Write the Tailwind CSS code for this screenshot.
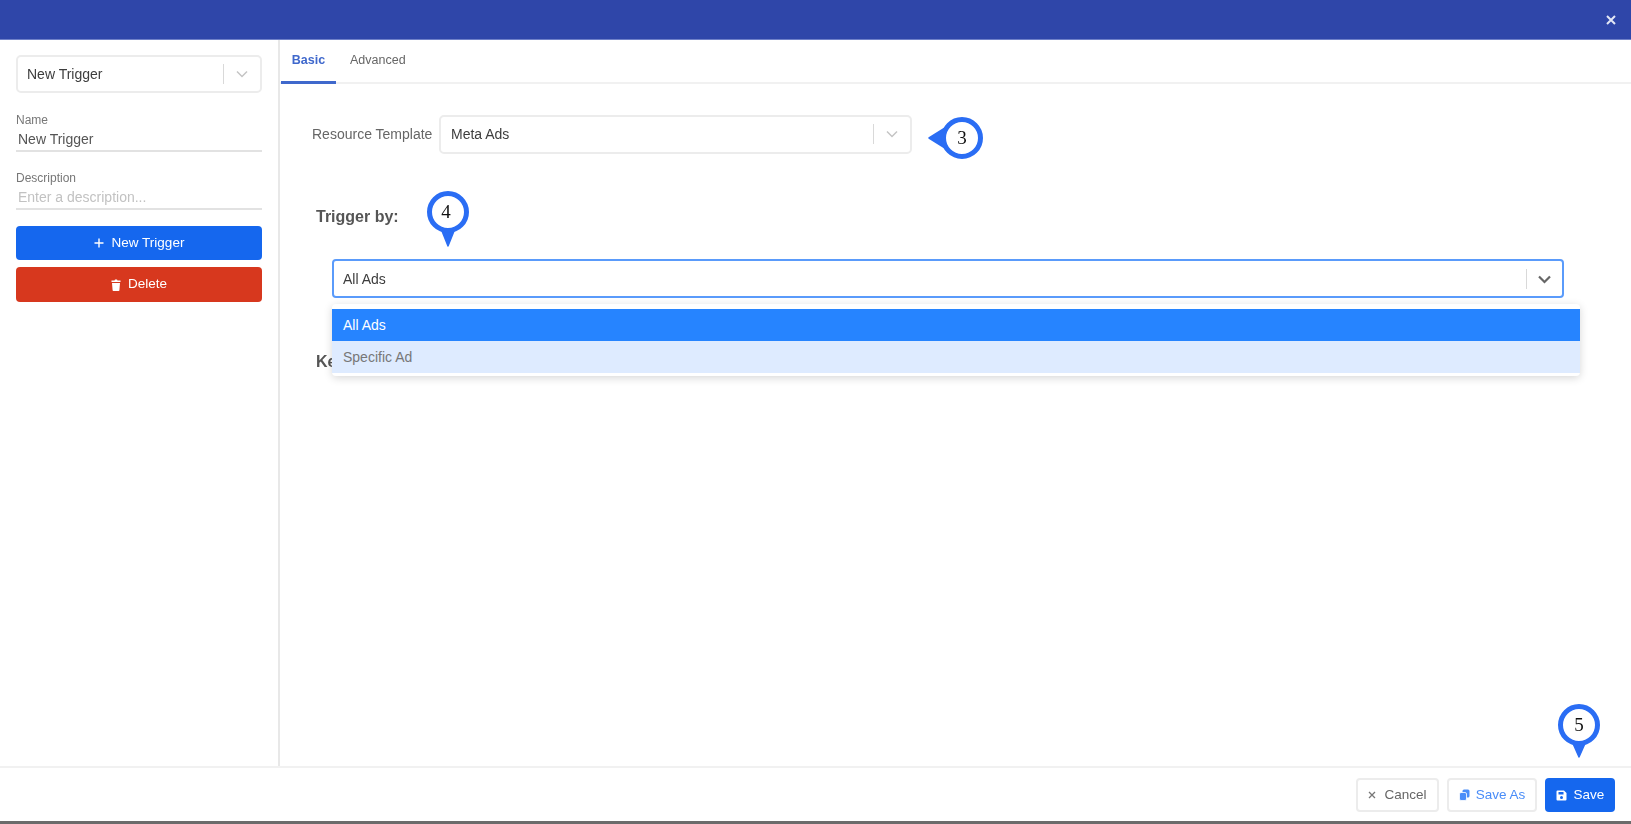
<!DOCTYPE html>
<html lang="en">

<head>
    <meta charset="UTF-8">
    <meta name="viewport" content="width=device-width, initial-scale=1.0">
    <title>Trigger</title>
    <script src="https://cdn.jsdelivr.net/npm/@tailwindcss/browser@4"></script>
</head>

<body class="m-0 p-0 h-screen w-screen relative overflow-hidden bg-white font-['Liberation_Sans',sans-serif] text-[#555]">

    <div class="h-full w-full flex flex-col blur-[0.5px]">

        <!-- title bar -->
        <div class="h-[40px] shrink-0 bg-[#2f46a9] border-b border-[#6f80c8] flex justify-end items-center pr-[14px] pt-[1px]">
            <svg class="w-[12px] h-[12px] text-[#e4e7f5]" viewBox="0 0 12 12" fill="none" stroke="currentColor" stroke-width="2">
                <path d="M2 2l8 8M10 2l-8 8"></path>
            </svg>
        </div>

        <div class="flex-1 flex min-h-0">

            <!-- sidebar -->
            <div class="w-[280px] shrink-0 border-r-2 border-[#e8e8e8] pl-[16px] pt-[15px]">
                <div class="h-[38px] w-[246px] border-2 border-[#ececec] rounded-[5px] flex items-center pl-[9px] text-[14px] text-[#3d3d3d]">
                    <span class="flex-1">New Trigger</span>
                    <span class="w-[1px] h-[20px] bg-[#d9d9d9]"></span>
                    <svg class="w-[12px] h-[8px] mx-[12px] text-[#c4c4c4]" viewBox="0 0 12 8" fill="none" stroke="currentColor" stroke-width="1.5"><path d="M1 1.5l5 5 5-5"></path></svg>
                </div>

                <div class="mt-[19px] text-[12px] leading-[16px] text-[#777]">Name</div>
                <div class="h-[24px] w-[246px] border-b-2 border-[#e2e2e2] pl-[2px] text-[14px] leading-[22px] text-[#555]">New Trigger</div>

                <div class="mt-[18px] text-[12px] leading-[16px] text-[#777]">Description</div>
                <div class="h-[24px] w-[246px] border-b-2 border-[#e2e2e2] pl-[2px] text-[14px] leading-[22px] text-[#c2c2c2]">Enter a description...</div>

                <button class="mt-[16px] h-[34px] w-[246px] bg-[#1567ee] rounded-[4px] flex justify-center items-center gap-[8px] text-[13.5px] font-medium text-white">
                    <svg class="w-[10px] h-[10px]" viewBox="0 0 10 10" fill="none" stroke="currentColor" stroke-width="1.4"><path d="M5 0.5v9M0.5 5h9"></path></svg>
                    New Trigger
                </button>
                <button class="mt-[7px] h-[35px] w-[246px] bg-[#d7381e] rounded-[4px] flex justify-center items-center gap-[7px] text-[13.5px] font-medium text-white">
                    <svg class="w-[10px] h-[12px]" viewBox="0 0 10 12" fill="currentColor"><path d="M0.5 1.5h3l0.5-1h2l0.5 1h3v1.5h-9zM1 4h8l-0.6 7.2a0.8 0.8 0 0 1-0.8 0.8h-5.2a0.8 0.8 0 0 1-0.8-0.8z"></path></svg>
                    Delete
                </button>
            </div>

            <!-- content -->
            <div class="flex-1 min-w-0">
                <div class="h-[44px] border-b-2 border-[#f1f1f1] flex pl-[1px] text-[12.5px] leading-[41px]">
                    <div class="w-[55px] h-[44px] text-center font-bold text-[#3f68cc] border-b-[3px] border-[#3f68cc]">Basic</div>
                    <div class="ml-[14px] text-[#666]">Advanced</div>
                </div>

                <div class="pl-[32px] pt-[31px] flex items-center h-[69px]">
                    <span class="text-[14px] text-[#666] w-[127px] pt-[1px]">Resource Template</span>
                    <div class="h-[39px] w-[473px] border-2 border-[#ececec] rounded-[5px] flex items-center pl-[10px] text-[14px] text-[#3d3d3d]">
                        <span class="flex-1">Meta Ads</span>
                        <span class="w-[1px] h-[20px] bg-[#d9d9d9]"></span>
                        <svg class="w-[12px] h-[8px] mx-[12px] text-[#c4c4c4]" viewBox="0 0 12 8" fill="none" stroke="currentColor" stroke-width="1.5"><path d="M1 1.5l5 5 5-5"></path></svg>
                    </div>
                </div>

                <div class="pl-[36px] mt-[54px] text-[16px] leading-[20px] font-bold text-[#555]">Trigger by:</div>

                <div class="relative ml-[52px] mt-[32px] w-[1232px]">
                    <div class="h-[39px] border-2 border-[#5a9bfb] rounded-[4px] flex items-center pl-[9px] pt-[1px] text-[14px] text-[#3d3d3d]">
                        <span class="flex-1">All Ads</span>
                        <span class="w-[1px] h-[20px] bg-[#d9d9d9]"></span>
                        <svg class="w-[13px] h-[9px] mx-[11px] text-[#666]" viewBox="0 0 13 9" fill="none" stroke="currentColor" stroke-width="2.2"><path d="M1 1.5l5.5 5.5 5.5-5.5"></path></svg>
                    </div>
                    <!-- dropdown menu -->
                    <div class="absolute z-10 left-[0px] top-[45px] w-[1248px] h-[72px] py-[5px] bg-white rounded-[4px] shadow-[0_2px_8px_rgba(0,0,0,0.16)] text-[14px]">
                        <div class="h-[32px] bg-[#2684ff] text-white pl-[11px] leading-[33px]">All Ads</div>
                        <div class="h-[32px] bg-[#deebff] text-[#777] pl-[11px] leading-[32px]">Specific Ad</div>
                    </div>
                </div>

                <div class="pl-[36px] mt-[54px] text-[16px] leading-[20px] font-bold text-[#555]">Keywords</div>
            </div>
        </div>

        <!-- footer -->
        <div class="h-[58px] shrink-0 border-t-2 border-b-[3px] border-t-[#f1f1f1] border-b-[#6b6b6b] flex justify-end items-start gap-[8px] pt-[10px] pr-[16px] text-[13.5px] font-medium">
            <button class="h-[34px] w-[83px] border-2 border-[#ececec] rounded-[4px] flex justify-center items-center gap-[8px] text-[#666]">
                <svg class="w-[8px] h-[8px] text-[#777]" viewBox="0 0 8 8" fill="none" stroke="currentColor" stroke-width="1.3"><path d="M1 1l6 6M7 1l-6 6"></path></svg>
                Cancel
            </button>
            <button class="h-[34px] w-[90px] border-2 border-[#ececec] rounded-[4px] flex justify-center items-center gap-[6px] text-[#4a8df8]">
                <svg class="w-[11px] h-[12px]" viewBox="0 0 11 12" fill="currentColor"><rect x="3.5" y="0.5" width="7" height="8" rx="1.5"></rect><rect x="0.5" y="3.5" width="7" height="8" rx="1.5" stroke="#fff" stroke-width="0.8"></rect></svg>
                Save As
            </button>
            <button class="h-[34px] w-[70px] bg-[#1567ee] rounded-[4px] flex justify-center items-center gap-[7px] text-white">
                <svg class="w-[11px] h-[11px]" viewBox="0 0 11 11" fill="currentColor" fill-rule="evenodd"><path d="M1.5 0.5h6.5l2.5 2.5v6.5a1 1 0 0 1-1 1h-8a1 1 0 0 1-1-1v-8a1 1 0 0 1 1-1zM2.5 2v2.5h5v-2.5zM5.5 6a1.5 1.5 0 1 0 0 3a1.5 1.5 0 0 0 0-3z"></path></svg>
                Save
            </button>
        </div>
    </div>

    <!-- numbered callouts drawn over the page -->
    <div class="absolute z-20 left-[940px] top-[116px] w-[44px] h-[44px]">
        <svg class="absolute left-0 top-0 w-[58px] h-[44px] -translate-x-[13px]" viewBox="0 0 58 44" fill="none">
            <path d="M2 22 L18 12 L18 32 Z" fill="#2a6df4" stroke="#2a6df4" stroke-linejoin="round" stroke-width="1.5"></path>
            <circle cx="35" cy="22" r="18.5" fill="#fff" stroke="#2a6df4" stroke-width="5"></circle>
        </svg>
        <span class="absolute inset-0 pt-[1px] flex items-center justify-center font-['Liberation_Serif',serif] text-[19px] text-[#111]">3</span>
    </div>

    <div class="absolute z-20 left-[426px] top-[190px] w-[44px] h-[58px]">
        <svg class="absolute left-0 top-0 w-[44px] h-[58px]" viewBox="0 0 44 58" fill="none">
            <path d="M14 36 L30 36 L22 56 Z" fill="#2a6df4" stroke="#2a6df4" stroke-linejoin="round" stroke-width="1.5"></path>
            <circle cx="22" cy="22" r="18.5" fill="#fff" stroke="#2a6df4" stroke-width="5"></circle>
        </svg>
        <span class="absolute left-[-2px] top-[0px] w-[44px] h-[44px] flex items-center justify-center font-['Liberation_Serif',serif] text-[19px] text-[#111]">4</span>
    </div>

    <div class="absolute z-20 left-[1557px] top-[703px] w-[44px] h-[58px]">
        <svg class="absolute left-0 top-0 w-[44px] h-[58px]" viewBox="0 0 44 58" fill="none">
            <path d="M14 36 L30 36 L22 54 Z" fill="#2a6df4" stroke="#2a6df4" stroke-linejoin="round" stroke-width="1.5"></path>
            <circle cx="22" cy="22" r="18.5" fill="#fff" stroke="#2a6df4" stroke-width="5"></circle>
        </svg>
        <span class="absolute left-0 top-[0px] w-[44px] h-[44px] flex items-center justify-center font-['Liberation_Serif',serif] text-[19px] text-[#111]">5</span>
    </div>

</body>

</html>
